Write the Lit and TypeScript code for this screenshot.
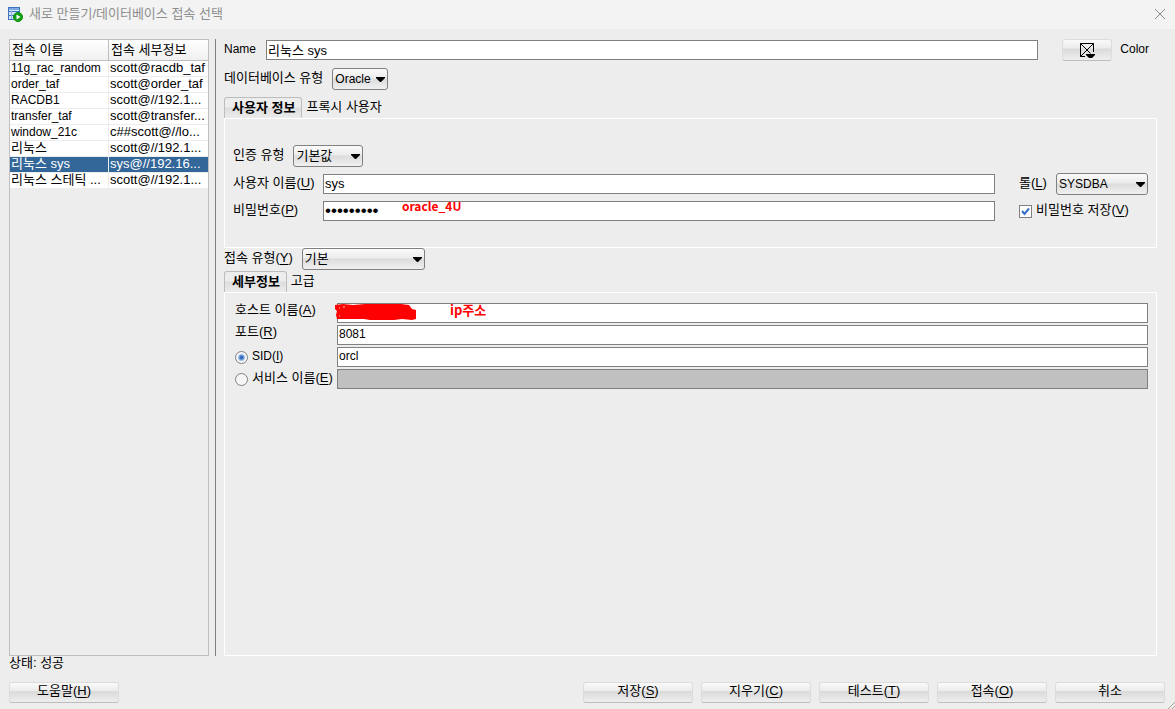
import { LitElement, html, css, svg } from "lit";
import { customElement, property, state } from "lit/decorators.js";
import { classMap } from "lit/directives/class-map.js";

interface Connection {
  name: string;
  detail: string;
}

const CONNECTIONS: Connection[] = [
  { name: "11g_rac_random", detail: "scott@racdb_taf" },
  { name: "order_taf", detail: "scott@order_taf" },
  { name: "RACDB1", detail: "scott@//192.1..." },
  { name: "transfer_taf", detail: "scott@transfer..." },
  { name: "window_21c", detail: "c##scott@//lo..." },
  { name: "리눅스", detail: "scott@//192.1..." },
  { name: "리눅스 sys", detail: "sys@//192.16..." },
  { name: "리눅스 스테틱 ...", detail: "scott@//192.1..." },
];

const isLatin = (s: string) => /^[\x00-\x7f]+$/.test(s);

@customElement("mnemonic-text")
class MnemonicText extends LitElement {
  @property() text = "";
  @property() key = "";
  static styles = css`
    :host { white-space: nowrap; }
    .key { text-decoration: underline; text-underline-offset: 2px; }
  `;
  render() {
    return html`${this.text}(<span class="key">${this.key}</span>)`;
  }
}

@customElement("app-root")
class AppRoot extends LitElement {
  @state() private selected = 6;

  static styles = css`
    :host {
      position: relative;
      display: flex;
      flex-direction: column;
      min-height: 100vh;
      box-sizing: border-box;
      background: #ededed;
      color: #000;
      font: 13px/16px "Liberation Sans", "Noto Sans CJK KR", sans-serif;
    }
    * { box-sizing: border-box; }
    .latin { font-size: 12px; }
    .titlebar {
      display: flex;
      align-items: center;
      gap: 6px;
      height: 29px;
      padding: 0 9px 2px 7px;
      background: #f3f3f3;
      color: #8e8e8e;
    }
    .titlebar h1 { flex: 1; margin: 0; font: inherit; }
    .titlebar svg { display: block; }
    .close { padding: 0; border: 0; background: none; }

    .main {
      flex: 1;
      display: grid;
      grid-template-columns: 200px 1px 1fr;
      padding: 10px 18px 0 9px;
    }
    .list { border: 1px solid #bfbfbf; }
    .divider { margin-left: 6px; width: 1px; background: #808080; }
    table { width: 100%; border-collapse: separate; border-spacing: 0; table-layout: fixed; }
    th, td { text-align: left; font-weight: normal; white-space: nowrap; overflow: hidden; }
    th {
      height: 21px;
      padding: 0 2px 1px;
      border-bottom: 1px solid #bfbfbf;
      background: linear-gradient(#fff, #f0f0f0);
    }
    td { height: 16px; padding: 0 1px 1px; line-height: 14px; background: #fff; border-bottom: 1px solid #ededed; }
    th:first-child { border-right: 1px solid #bfbfbf; }
    td:first-child { border-right: 1px solid #ededed; }
    .selected td { background: #336699; color: #fff; }

    .form { display: flex; flex-direction: column; padding-left: 14px; }
    label { padding-bottom: 2px; }
    .row { display: flex; align-items: center; }
    .name-row { gap: 10px; height: 22px; }
    .name-row input { flex: 1; }
    .name-row .color { margin-left: 14px; width: 50px; }
    .name-row .color-label { padding-right: 8px; margin-left: -2px; }
    .type-row { gap: 9px; margin: 7px 0; height: 22px; }
    .conn-row { gap: 9px; height: 22px; margin-bottom: 1px; }

    input[type="text"], input[type="password"] {
      min-width: 0;
      width: 100%;
      height: 20px;
      margin: 0;
      padding: 0 1px 2px;
      border: 1px solid #808080;
      border-radius: 0;
      background: #fff;
      color: #000;
      font: inherit;
      outline: 0;
    }
    input[type="text"].latin { font-size: 12px; }
    input[type="password"] { padding: 0 1px; font-size: 17px; }
    input[type="text"]:disabled { background: #c0c0c0; }

    .select { display: inline-grid; align-items: center; height: 22px; }
    .select > * { grid-area: 1 / 1; }
    .select svg { justify-self: end; margin-right: 3px; pointer-events: none; }
    select {
      appearance: none;
      width: 100%;
      height: 22px;
      margin: 0;
      padding: 0 14px 1px 2px;
      border: 1px solid #808080;
      border-radius: 3px;
      background: linear-gradient(#fafafa, #ececec 45%, #dcdcdc 50%, #f0f0f0);
      color: #000;
      font: inherit;
    }
    select.latin { font-size: 12px; }
    .w-db { width: 56px; }
    .w-auth { width: 70px; }
    .w-role { width: 92px; }
    .w-conn { width: 123px; }

    .tabs { display: flex; height: 22px; margin-bottom: -1px; }
    .tab {
      padding: 0 4px 2px;
      border: 0;
      background: none;
      color: #000;
      font: inherit;
    }
    .tab.active {
      padding: 0 6px 2px 7px;
      border: 1px solid #bdbdbd;
      border-bottom: 0;
      border-radius: 3px 3px 0 0;
      background: linear-gradient(#ededed 40%, #dedede 50%, #ededed);
      font-weight: bold;
    }
    .pane { border: 1px solid #fff; }
    .user-pane { padding: 26px 8px 25px; }
    .detail-pane { flex: 1; padding: 10px 8px 0 10px; }

    .auth-row { gap: 9px; margin-bottom: 6px; }
    .credentials {
      display: grid;
      grid-template-columns: 82px 1fr 145px;
      column-gap: 8px;
      row-gap: 5px;
      align-items: center;
    }
    .side {
      display: flex;
      align-items: center;
      justify-content: space-between;
      height: 22px;
      padding-left: 16px;
    }
    .side.check { justify-content: flex-start; gap: 4px; }
    .details {
      display: grid;
      grid-template-columns: 94px 1fr;
      column-gap: 8px;
      row-gap: 2px;
      align-items: center;
    }
    .details label { white-space: nowrap; }
    .details > label { align-self: start; line-height: 14px; }
    .option { display: flex; align-items: center; gap: 4px; }
    .field { position: relative; display: flex; }
    .note {
      position: absolute;
      top: -4px;
      left: 79px;
      color: #f00;
      font: bold 12px/18px "Noto Sans CJK KR", sans-serif;
      white-space: nowrap;
      pointer-events: none;
    }
    .note.ip { top: -2px; left: 113px; font-size: 13px; }
    .scribble { position: absolute; top: 0; left: -3px; pointer-events: none; }

    input[type="radio"], input[type="checkbox"] {
      appearance: none;
      flex: none;
      width: 13px;
      height: 13px;
      margin: 0;
      border: 1px solid #808080;
      background: #f6f6f6;
    }
    input[type="radio"] { border-radius: 50%; }
    input[type="radio"]:checked { background: radial-gradient(circle, #2f66bd 0 1px, #9dbce6 3px, #f4f7fb 4px); }
    input[type="checkbox"] { background: #fff; }
    .tick { display: grid; align-items: center; justify-items: center; }
    .tick > * { grid-area: 1 / 1; }
    .tick svg { pointer-events: none; }

    .status { padding: 0 9px; line-height: 14px; }
    .buttons { display: flex; gap: 8px; padding: 12px 10px 6px 9px; }
    .spacer { flex: 1; }
    .button {
      display: grid;
      place-items: center;
      width: 110px;
      height: 21px;
      padding: 0 0 3px;
      border: 1px solid #dcdcdc;
      border-bottom-color: #bdbdbd;
      border-radius: 3px;
      background: linear-gradient(#fafafa, #ececec 40%, #dadada 45%, #efefef);
      color: #000;
      font: inherit;
    }
    .button.color { height: 22px; padding: 0; }
    .grip { position: absolute; right: 0; bottom: 0; }
  `;

  private select(id: string, width: string, value: string) {
    return html`<span class="select ${width}">
      <select id=${id} class=${classMap({ latin: isLatin(value) })}><option>${value}</option></select>
      <svg width="9" height="5" viewBox="0 0 9 5"><path d="M0 0h9v1L5 5H4L0 1z" /></svg>
    </span>`;
  }

  private button(text: string, key = "") {
    return html`<button class="button">
      ${key ? html`<mnemonic-text text=${text} key=${key}></mnemonic-text>` : text}
    </button>`;
  }

  private logo() {
    return svg`<svg width="16" height="16" viewBox="0 0 16 16">
      <rect x="1.500" y="1.500" width="11" height="12" fill="#d3e4f8" stroke="#3f74c2" />
      <path d="M2 2h10v2H2z" fill="#7fa9e3" />
      <path d="M1 5.500h12M1 9.500h12" stroke="#3f74c2" />
      <path d="M4.500 5v8" stroke="#8fb2e4" />
      <circle cx="11" cy="11" r="4.500" fill="#12a012" stroke="#0a8a0a" />
      <path d="M9.500 8.500v5l4-2.500z" fill="#fff" />
    </svg>`;
  }

  render() {
    return html`
      <header class="titlebar">
        ${this.logo()}
        <h1>새로 만들기/데이터베이스 접속 선택</h1>
        <button class="close" aria-label="닫기">
          <svg width="12" height="12" viewBox="0 0 12 12"><path d="M1 1l10 10M11 1L1 11" stroke="#8c8c8c" fill="none" /></svg>
        </button>
      </header>
      <main class="main">
        <div class="list">
          <table>
            <thead><tr><th>접속 이름</th><th>접속 세부정보</th></tr></thead>
            <tbody>
              ${CONNECTIONS.map((c, i) => html`
                <tr class=${classMap({ selected: i === this.selected })} @click=${() => (this.selected = i)}>
                  <td class=${classMap({ latin: isLatin(c.name) })}>${c.name}</td>
                  <td>${c.detail}</td>
                </tr>`)}
            </tbody>
          </table>
        </div>
        <div class="divider"></div>
        <section class="form">
          <div class="row name-row">
            <label class="latin" for="name">Name</label>
            <input id="name" type="text" .value=${"리눅스 sys"} />
            <button class="button color" id="color">
              <svg width="16" height="16" viewBox="0 0 16 16">
                <path d="M6 14.500H1.500v-13h13V10M1.500 1.500l10 10M14.500 1.500l-13 13" fill="none" stroke="#000" />
                <path d="M7 12h9v1l-3 3h-3l-3-3z" />
              </svg>
            </button>
            <label class="latin color-label" for="color">Color</label>
          </div>
          <div class="row type-row">
            <label for="dbtype">데이터베이스 유형</label>
            ${this.select("dbtype", "w-db", "Oracle")}
          </div>
          <div class="tabs">
            <button class="tab active">사용자 정보</button>
            <button class="tab">프록시 사용자</button>
          </div>
          <div class="pane user-pane">
            <div class="row auth-row">
              <label for="auth">인증 유형</label>
              ${this.select("auth", "w-auth", "기본값")}
            </div>
            <div class="credentials">
              <label for="user"><mnemonic-text text="사용자 이름" key="U"></mnemonic-text></label>
              <input id="user" type="text" .value=${"sys"} />
              <div class="side">
                <label for="role"><mnemonic-text text="롤" key="L"></mnemonic-text></label>
                ${this.select("role", "w-role", "SYSDBA")}
              </div>
              <label for="pw"><mnemonic-text text="비밀번호" key="P"></mnemonic-text></label>
              <div class="field">
                <input id="pw" type="password" .value=${"oracle_4U"} />
                <span class="note">oracle_4U</span>
              </div>
              <div class="side check">
                <span class="tick">
                  <input id="save" type="checkbox" checked />
                  <svg width="9" height="9" viewBox="0 0 9 9"><path d="M1 4l2.500 3L8 1.500" fill="none" stroke="#3670c8" stroke-width="2" /></svg>
                </span>
                <label for="save"><mnemonic-text text="비밀번호 저장" key="V"></mnemonic-text></label>
              </div>
            </div>
          </div>
          <div class="row conn-row">
            <label for="conn"><mnemonic-text text="접속 유형" key="Y"></mnemonic-text></label>
            ${this.select("conn", "w-conn", "기본")}
          </div>
          <div class="tabs">
            <button class="tab active">세부정보</button>
            <button class="tab">고급</button>
          </div>
          <div class="pane detail-pane">
            <div class="details">
              <label for="host"><mnemonic-text text="호스트 이름" key="A"></mnemonic-text></label>
              <div class="field">
                <input id="host" type="text" />
                <svg class="scribble" width="84" height="18" viewBox="0 0 84 18">
                  <path d="M1 2l8-1 10 1 12-1h36l8 1 3 4 4 1v9l-4 1-10-1-8 1H36l-6-1H3l-1-4 1-4-2-2z" fill="#f00" />
                  <path d="M5 5h1M9 4h2M5 13h1" stroke="#fbb" />
                </svg>
                <span class="note ip">ip주소</span>
              </div>
              <label for="port"><mnemonic-text text="포트" key="R"></mnemonic-text></label>
              <input id="port" class="latin" type="text" .value=${"8081"} />
              <div class="option">
                <input id="sid" type="radio" name="target" checked />
                <label class="latin" for="sid"><mnemonic-text text="SID" key="I"></mnemonic-text></label>
              </div>
              <input class="latin" type="text" aria-label="SID" .value=${"orcl"} />
              <div class="option">
                <input id="service" type="radio" name="target" />
                <label for="service"><mnemonic-text text="서비스 이름" key="E"></mnemonic-text></label>
              </div>
              <input type="text" aria-label="서비스 이름" disabled />
            </div>
          </div>
        </section>
      </main>
      <div class="status">상태: 성공</div>
      <footer class="buttons">
        ${this.button("도움말", "H")}
        <span class="spacer"></span>
        ${this.button("저장", "S")}
        ${this.button("지우기", "C")}
        ${this.button("테스트", "T")}
        ${this.button("접속", "O")}
        ${this.button("취소")}
      </footer>
      <svg class="grip" width="7" height="7" viewBox="0 0 7 7">
        <path d="M0 7L7 0M4 7L7 4" stroke="#a8a590" fill="none" />
      </svg>
    `;
  }
}
